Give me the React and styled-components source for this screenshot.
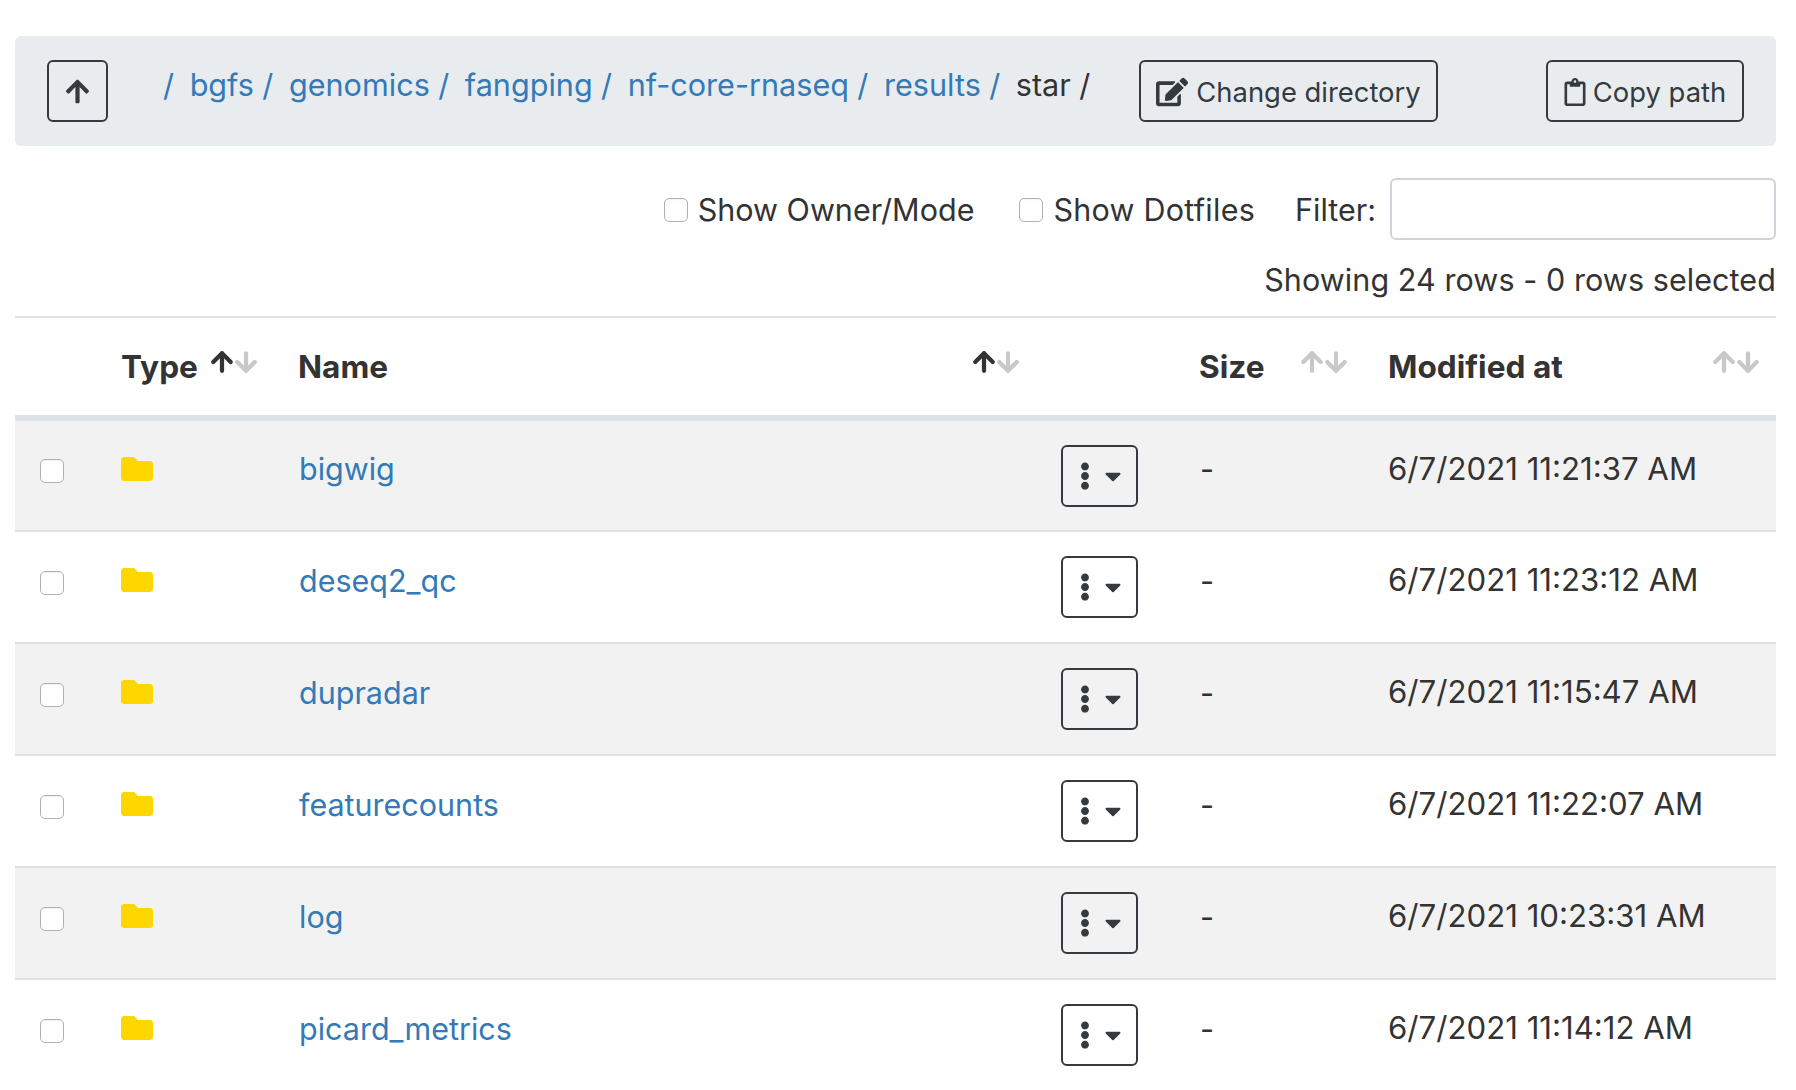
import React from "react";
import styled, { createGlobalStyle } from "styled-components";
import { FaArrowUp, FaEdit, FaRegClipboard, FaEllipsisV, FaFolder, FaCaretDown } from "react-icons/fa";
import { ArrowUp, ArrowDown } from "lucide-react";

const GlobalStyle = createGlobalStyle`
  html, body {
    margin: 0;
    height: 1090px;
    overflow: hidden;
    background: #fff;
  }
  body {
    font-family: Inter, "Liberation Sans", sans-serif;
    font-size: 30.5px;
    color: #333;
  }
`;

const crumbs = ["bgfs", "genomics", "fangping", "nf-core-rnaseq", "results"];

const rows = [
  { name: "bigwig", modified: "6/7/2021 11:21:37 AM" },
  { name: "deseq2_qc", modified: "6/7/2021 11:23:12 AM" },
  { name: "dupradar", modified: "6/7/2021 11:15:47 AM" },
  { name: "featurecounts", modified: "6/7/2021 11:22:07 AM" },
  { name: "log", modified: "6/7/2021 10:23:31 AM" },
  { name: "picard_metrics", modified: "6/7/2021 11:14:12 AM" },
];

function SortCaret({ active }) {
  return (
    <Carets>
      <Caret $on={active}>
        <ArrowUp size={30} strokeWidth={3.4} />
      </Caret>
      <Caret>
        <ArrowDown size={30} strokeWidth={3.4} />
      </Caret>
    </Carets>
  );
}

export default function App() {
  return (
    <Page>
      <GlobalStyle />
      <PathBar>
        <UpButton>
          <FaArrowUp size={27} />
        </UpButton>
        <Crumbs>
          <Slash>/</Slash>
          {crumbs.map((c) => (
            <React.Fragment key={c}>
              <CrumbLink>{c}</CrumbLink>
              <Slash>/</Slash>
            </React.Fragment>
          ))}
          <CurrentDir>star</CurrentDir>
          <Slash $dark>/</Slash>
        </Crumbs>
        <OutlineButton $wide>
          <FaEdit size={32} />
          Change directory
        </OutlineButton>
        <CopyButton>
          <FaRegClipboard size={28} />
          Copy path
        </CopyButton>
      </PathBar>

      <Options>
        <CheckLabel>
          <Check type="checkbox" />
          Show Owner/Mode
        </CheckLabel>
        <CheckLabel $spaced>
          <Check type="checkbox" />
          Show Dotfiles
        </CheckLabel>
        <FilterLabel>Filter:</FilterLabel>
        <FilterInput type="text" />
      </Options>
      <RowCount>Showing 24 rows - 0 rows selected</RowCount>

      <Table>
        <colgroup>
          <col width="89" />
          <col width="177" />
          <col width="762" />
          <col width="139" />
          <col width="189" />
          <col />
        </colgroup>
        <thead>
          <tr>
            <Th />
            <Th>
              <HeadInner $inset>
                Type
                <SortCaret active />
              </HeadInner>
            </Th>
            <Th>
              <HeadInner $inset>
                Name
                <SortCaret active />
              </HeadInner>
            </Th>
            <Th />
            <Th>
              <HeadInner $inset>
                Size
                <SortCaret />
              </HeadInner>
            </Th>
            <Th>
              <HeadInner>
                Modified at
                <SortCaret />
              </HeadInner>
            </Th>
          </tr>
        </thead>
        <tbody>
          {rows.map((r) => (
            <Row key={r.name}>
              <Td>
                <RowCheck type="checkbox" />
              </Td>
              <Td>
                <FolderIcon>
                  <FaFolder size={32} />
                </FolderIcon>
              </Td>
              <Td>
                <NameLink>{r.name}</NameLink>
              </Td>
              <ActionTd>
                <MenuButton>
                  <FaEllipsisV size={28} />
                  <FaCaretDown size={26} />
                </MenuButton>
              </ActionTd>
              <Td>-</Td>
              <DateTd>{r.modified}</DateTd>
            </Row>
          ))}
        </tbody>
      </Table>
    </Page>
  );
}

const Page = styled.div`
  padding: 36px 20px 0 15px;
`;

const PathBar = styled.div`
  display: flex;
  align-items: center;
  height: 110px;
  padding: 0 32px;
  background: #e9ecef;
  border-radius: 6px;
`;

const OutlineButton = styled.button`
  display: flex;
  align-items: center;
  justify-content: center;
  gap: 8px;
  box-sizing: border-box;
  height: 62px;
  width: ${(p) => (p.$wide ? "299px" : "198px")};
  margin-left: ${(p) => (p.$wide ? "0" : "108px")};
  padding: 2px 0 0;
  font-family: inherit;
  font-size: 27.4px;
  color: #343a40;
  background: transparent;
  border: 2px solid #343a40;
  border-radius: 6px;
`;

const CopyButton = styled(OutlineButton)`
  gap: 4px;
  padding-right: 3px;
`;

const UpButton = styled(OutlineButton)`
  width: 61px;
  margin-left: 0;
  padding: 0;
  flex-shrink: 0;
`;

const Crumbs = styled.div`
  display: flex;
  flex: 1;
  align-items: center;
  margin-top: -14px;
  padding-left: 55px;
  font-size: 30.6px;
`;

const Slash = styled.span`
  margin: 0 15.6px 0 8.4px;
  color: ${(p) => (p.$dark ? "#333" : "#337ab7")};
  &:first-child {
    margin-left: 0;
  }
`;

const CrumbLink = styled.a`
  color: #337ab7;
`;

const CurrentDir = styled.span`
  color: #333;
`;

const Options = styled.div`
  display: flex;
  align-items: center;
  justify-content: flex-end;
  height: 62px;
  margin-top: 32px;
`;

const CheckLabel = styled.label`
  display: flex;
  align-items: center;
  margin-right: 45px;
  letter-spacing: ${(p) => (p.$spaced ? "0.25px" : "normal")};
`;

const Check = styled.input`
  appearance: none;
  box-sizing: border-box;
  width: 24px;
  height: 24px;
  margin: 2px 10px 0 0;
  background: #fff;
  border: 1.5px solid #b0b0b0;
  border-radius: 5px;
  box-shadow: inset 0 1px 2px rgba(0, 0, 0, 0.06);
`;

const RowCheck = styled(Check)`
  display: block;
  margin: 5px 0 0 7px;
`;

const FilterLabel = styled.span`
  margin: 0 14px 0 -5px;
`;

const FilterInput = styled.input`
  box-sizing: border-box;
  width: 386px;
  height: 62px;
  background: #fff;
  border: 2px solid #ced4da;
  border-radius: 6px;
`;

const RowCount = styled.div`
  margin-top: 24px;
  height: 52px;
  line-height: 32px;
  text-align: right;
  letter-spacing: 0.08px;
`;

const Table = styled.table`
  width: 100%;
  table-layout: fixed;
  border-collapse: collapse;
`;

const Th = styled.th`
  height: 97px;
  padding: 0 18px;
  text-align: left;
  font-size: 31.6px;
  font-weight: 700;
  border-top: 2px solid #dee2e6;
  border-bottom: 6px solid #dee2e6;
`;

const HeadInner = styled.div`
  display: flex;
  align-items: center;
  justify-content: space-between;
  margin-left: -1px;
  padding-right: ${(p) => (p.$inset ? "7px" : "0")};
`;

const Carets = styled.span`
  display: flex;
  margin: -10px -5px 0 0;
`;

const Caret = styled.span`
  display: flex;
  margin-left: -6px;
  color: ${(p) => (p.$on ? "#333" : "#c8c8c8")};
`;

const Row = styled.tr`
  height: 112px;
  &:first-child {
    height: 113px;
  }
  &:nth-child(odd) {
    background: #f2f2f2;
  }
`;

const Td = styled.td`
  padding: 0 18px 14px;
  border-bottom: 2px solid #dee2e6;
`;

const ActionTd = styled(Td)`
  padding-bottom: 0;
`;

const DateTd = styled(Td)`
  font-size: 31.2px;
  text-indent: -1px;
`;

const FolderIcon = styled.span`
  display: flex;
  margin-left: -1px;
  color: #ffd700;
`;

const NameLink = styled.a`
  color: #337ab7;
`;

const MenuButton = styled.button`
  display: flex;
  align-items: center;
  justify-content: center;
  gap: 1px;
  box-sizing: border-box;
  width: 77px;
  height: 62px;
  padding: 0 3px 0 0;
  color: #343a40;
  background: transparent;
  border: 2px solid #343a40;
  border-radius: 6px;
`;
